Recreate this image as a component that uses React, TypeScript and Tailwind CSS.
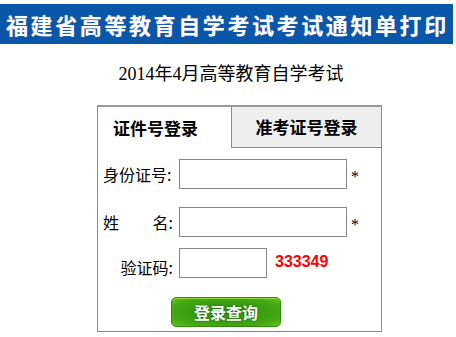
export default function App() {
  const cjk = "font-['Liberation_Serif','Noto_Sans_CJK_SC',serif]";
  return (
    <div className={`w-[456px] h-[337px] bg-white overflow-hidden ${cjk}`}>
      {/* banner */}
      <div className="mt-[4px] h-[40px] w-[453px] bg-[#0a56a8] pl-[6px] flex items-center">
        <span className="text-[22px] leading-none font-bold text-white tracking-[2.6px] font-['Noto_Sans_CJK_SC',sans-serif] [text-shadow:0_0_1px_#6a7fd0]">
          福建省高等教育自学考试考试通知单打印
        </span>
      </div>

      <div className="mt-[20px] text-center text-[18px] leading-[20px] text-black pl-[6px]">
        2014年4月高等教育自学考试
      </div>

      {/* login box */}
      <div className="mt-[21px] ml-[97px] w-[285px] h-[227px] border border-[#8a8a8a] border-t-[2px] border-t-[#999]">
        <div className="flex h-[41px]">
          <div className="w-[133px] pl-[15px] flex items-center text-[17px] font-bold text-black font-['Noto_Sans_CJK_SC',sans-serif]">
            证件号登录
          </div>
          <div className="flex-1 flex items-center justify-center bg-[#eeeeee] border-l border-b border-[#8a8a8a] text-[17px] font-bold text-black font-['Noto_Sans_CJK_SC',sans-serif]">
            准考证号登录
          </div>
        </div>

        <div className="flex flex-col pl-[5px]">
          <div className="flex items-center mt-[11px] h-[30px]">
            <div className="w-[70px] text-[16px] leading-none text-black font-['Noto_Sans_CJK_SC',sans-serif]">身份证号:</div>
            <div className="ml-[6px] w-[168px] h-[30px] border border-[#888]" />
            <span className="ml-[4px] mt-[6px] text-[16px] text-black">*</span>
          </div>

          <div className="flex items-center mt-[18px] h-[30px]">
            <div className="w-[70px] flex justify-between text-[16px] leading-none text-black font-['Noto_Sans_CJK_SC',sans-serif]">
              <span>姓</span>
              <span>名:</span>
            </div>
            <div className="ml-[6px] w-[168px] h-[30px] border border-[#888]" />
            <span className="ml-[4px] mt-[6px] text-[16px] text-black">*</span>
          </div>

          <div className="flex mt-[11px] h-[30px]">
            <div className="w-[70px] self-end pb-[3px] text-right text-[16px] leading-none text-black font-['Noto_Sans_CJK_SC',sans-serif]">验证码:</div>
            <div className="ml-[6px] w-[88px] h-[30px] border border-[#888]" />
            <span className="ml-[8px] mt-[5px] text-[16px] leading-[18px] font-bold text-[#ff0000] font-['Liberation_Sans',sans-serif]">
              333349
            </span>
          </div>

          <div className="mt-[19px] ml-[68px]">
            <button className="w-[110px] h-[30px] rounded-[5px] border border-[#2f8a0c] bg-[radial-gradient(ellipse_at_center,#2e8f0c_0%,#3a9c10_45%,#46a914_75%,#6ac41e_100%)] shadow-[inset_0_1px_0_#8fdc3a] text-[16px] font-bold text-white font-['Noto_Sans_CJK_SC',sans-serif] [text-shadow:0_0_2px_#1c5a05] leading-none">
              登录查询
            </button>
          </div>
        </div>
      </div>
    </div>
  );
}
